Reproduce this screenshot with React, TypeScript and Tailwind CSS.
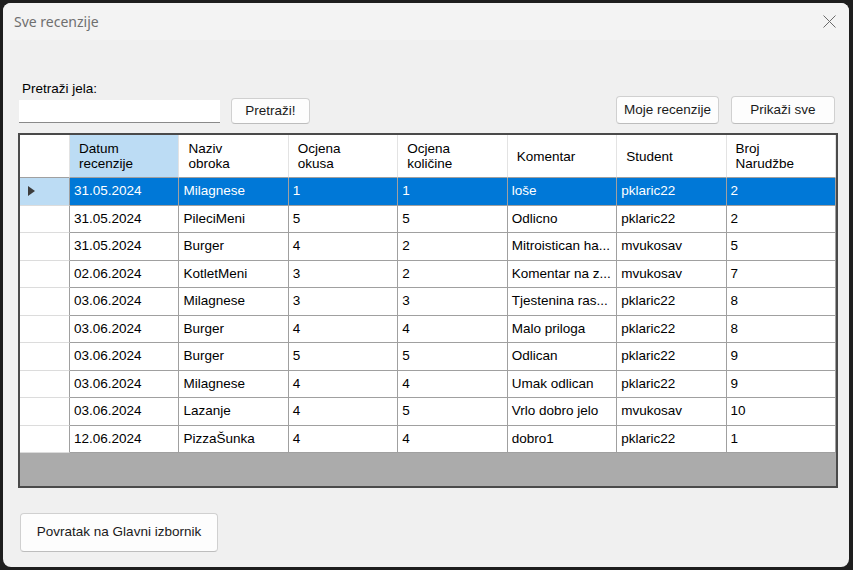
import React from "react";

const headers: string[][] = [
  ["Datum", "recenzije"],
  ["Naziv", "obroka"],
  ["Ocjena", "okusa"],
  ["Ocjena", "količine"],
  ["Komentar"],
  ["Student"],
  ["Broj", "Narudžbe"],
];

const rows: string[][] = [
  ["31.05.2024", "Milagnese", "1", "1", "loše", "pklaric22", "2"],
  ["31.05.2024", "PileciMeni", "5", "5", "Odlicno", "pklaric22", "2"],
  ["31.05.2024", "Burger", "4", "2", "Mitroistican ha...", "mvukosav", "5"],
  ["02.06.2024", "KotletMeni", "3", "2", "Komentar na z...", "mvukosav", "7"],
  ["03.06.2024", "Milagnese", "3", "3", "Tjestenina ras...", "pklaric22", "8"],
  ["03.06.2024", "Burger", "4", "4", "Malo priloga", "pklaric22", "8"],
  ["03.06.2024", "Burger", "5", "5", "Odlican", "pklaric22", "9"],
  ["03.06.2024", "Milagnese", "4", "4", "Umak odlican", "pklaric22", "9"],
  ["03.06.2024", "Lazanje", "4", "5", "Vrlo dobro jelo", "mvukosav", "10"],
  ["12.06.2024", "PizzaŠunka", "4", "4", "dobro1", "pklaric22", "1"],
];

const WinButton = ({ label, className }: { label: string; className: string }) => (
  <button
    className={`flex items-center justify-center rounded-[4px] border border-[#d0d0d0] border-b-[#bdbdbd] bg-[#fdfdfd] text-[#1a1a1a] ${className}`}
  >
    {label}
  </button>
);

export default function App() {
  return (
    <div className="w-[853px] h-[570px] bg-[#1e1e1e] pt-[3px] pl-[3px] pr-[4px] pb-[3px] font-['Liberation_Sans',Arial,sans-serif]">
      <div className="flex h-full flex-col overflow-hidden rounded-lg bg-[#f0f0f0]">
        {/* Title bar */}
        <div className="flex h-[37px] shrink-0 items-center justify-between bg-[#f3f3f3] pl-[11px] pr-[13px]">
          <span className="font-['Noto_Sans',sans-serif] text-[14px] text-[#6f6f6f]">Sve recenzije</span>
          <svg width="13" height="13" viewBox="0 0 13 13" className="text-[#6a6a6a]">
            <path d="M0.5 0.5 L12.5 12.5 M12.5 0.5 L0.5 12.5" stroke="currentColor" strokeWidth="1" />
          </svg>
        </div>

        {/* Body */}
        <div className="flex flex-col pl-[15px] pr-[11px]">
          {/* Search row */}
          <div className="mt-[41px] flex items-end justify-between">
            <div className="flex flex-col pl-px">
              <span className="pl-[3px] text-[13.5px] leading-[16px] text-black">Pretraži jela:</span>
              <div className="mt-px flex items-center">
                <div className="h-[23px] w-[201px] border-b border-[#8a8a8a] bg-white"></div>
                <WinButton label="Pretraži!" className="ml-[11px] h-[26px] w-[79px] text-[13.5px]" />
              </div>
            </div>
            <div className="flex gap-[12px] pr-[3px]">
              <WinButton label="Moje recenzije" className="h-[28px] w-[103px] text-[13.5px]" />
              <WinButton label="Prikaži sve" className="h-[28px] w-[104px] text-[13.5px]" />
            </div>
          </div>

          {/* Data grid */}
          <div className="mt-[9px] h-[355px] border-2 border-[#4a4a4a] bg-[#ababab] text-[13.5px] text-black">
            <div className="grid grid-cols-[50px_repeat(7,minmax(0,1fr))]">
              {/* Header */}
              <div className="h-[43px] border-b border-r border-b-[#a0a0a0] border-r-[#e3e3e3] bg-white"></div>
              {headers.map((h, i) => (
                <div
                  key={i}
                  className={`flex h-[43px] flex-col justify-center border-b border-r border-b-[#a0a0a0] border-r-[#e3e3e3] pl-[9px] leading-[15px] ${
                    i === 0 ? "bg-[#bcdcf4]" : "bg-white"
                  }`}
                >
                  {h.map((line, j) => (
                    <span key={j}>{line}</span>
                  ))}
                </div>
              ))}

              {/* Rows */}
              {rows.map((r, ri) => {
                const selected = ri === 0;
                return (
                  <React.Fragment key={ri}>
                    <div
                      className={`flex h-[27.5px] items-center border-b border-r border-b-[#dcdcdc] border-r-[#a0a0a0] pl-[8px] ${
                        selected ? "bg-[#bcdcf4]" : "bg-white"
                      }`}
                    >
                      {selected && (
                        <svg width="7" height="10" viewBox="0 0 7 10">
                          <path d="M0 0 L7 5 L0 10 Z" fill="#3c3c3c" />
                        </svg>
                      )}
                    </div>
                    {r.map((c, ci) => (
                      <div
                        key={ci}
                        className={`flex h-[27.5px] items-center overflow-hidden whitespace-nowrap border-b border-r border-[#a0a0a0] pl-[4px] ${
                          selected ? "bg-[#0078d7] text-white" : "bg-white"
                        }`}
                      >
                        {c}
                      </div>
                    ))}
                  </React.Fragment>
                );
              })}
            </div>
          </div>

          {/* Back button */}
          <div className="mt-[25px] pl-[2px]">
            <WinButton label="Povratak na Glavni izbornik" className="h-[39px] w-[198px] text-[13.5px]" />
          </div>
        </div>
      </div>
    </div>
  );
}
